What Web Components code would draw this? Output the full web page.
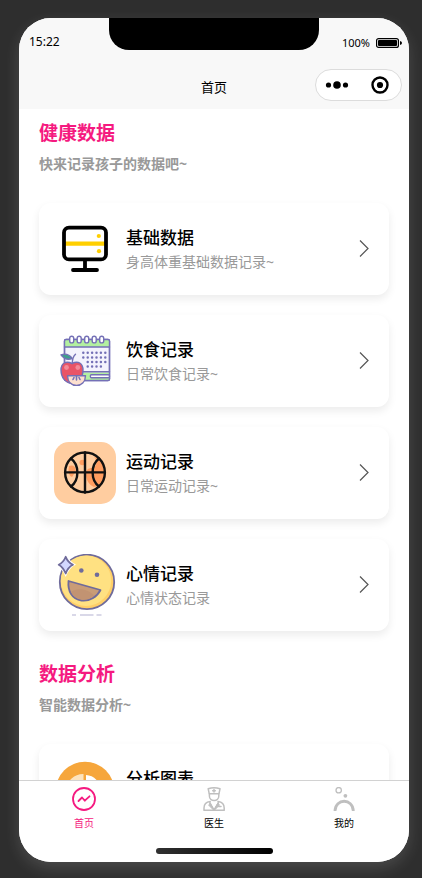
<!DOCTYPE html>
<html lang="zh-CN">
<head>
<meta charset="utf-8">
<meta name="viewport" content="width=device-width, initial-scale=1">
<title>首页</title>
<style>
    html, body{
        height: 100%;
    }
    body{
        --accent: #f51a80;
        --muted: #999;
        margin: 0;
        background: #2e2e2e;
        color: #000;
        font-family: "Noto Sans", "Noto Sans CJK SC", sans-serif;
    }
</style>
</head>
<body>
<phone-frame>
    <status-bar slot="top" time="15:22" battery="100%"></status-bar>
    <nav-bar slot="top">首页</nav-bar>

    <data-section heading="健康数据" note="快来记录孩子的数据吧~">
        <record-card heading="基础数据" note="身高体重基础数据记录~">
            <svg viewBox="0 0 62 62" fill="none" stroke="#000" stroke-width="3.8" stroke-linecap="round" aria-hidden="true">
                <path d="M11 25.7H51" stroke="#ffcf00" stroke-width="4.2"/>
                <rect x="10" y="9.6" width="42" height="31.8" rx="5"/>
                <path d="M31 42V51M19 52H43"/>
                <circle cx="44.8" cy="18" r="2.1" fill="#ffcf00" stroke="none"/>
                <circle cx="45" cy="33.2" r="2.1" fill="#ffcf00" stroke="none"/>
            </svg>
        </record-card>
        <record-card heading="饮食记录" note="日常饮食记录~">
            <svg viewBox="0 0 62 62" fill="none" stroke="#7470b6" stroke-width="1.4" stroke-linecap="round" stroke-linejoin="round" aria-hidden="true">
                <rect x="10.5" y="9.5" width="45" height="41" rx="1.5" fill="#f4f3fd"/>
                <path d="M11 17V11q0-1 1-1H54q1 0 1 1V17ZM11 42.5H55V50H11Z" fill="#b3f0a0" stroke="none"/>
                <path d="M10.5 17H55.5M10.5 41.8H55.5"/>
                <rect x="10.5" y="9.5" width="45" height="41" rx="1.5"/>
                <g fill="#fff">
                    <rect x="15.7" y="6.3" width="4" height="6.6" rx="2"/>
                    <rect x="23.2" y="6.3" width="4" height="6.6" rx="2"/>
                    <rect x="30.7" y="6.3" width="4" height="6.6" rx="2"/>
                    <rect x="38.2" y="6.3" width="4" height="6.6" rx="2"/>
                    <rect x="45.7" y="6.3" width="4" height="6.6" rx="2"/>
                    <rect x="36.4" y="44.8" width="19" height="3" rx="1"/>
                </g>
                <path d="M29.3 22.8H52M29.3 27.4H52M33.7 32H52M33.7 36.6H48" stroke-width="2.5" stroke-dasharray="0 4.4"/>
                <path d="M18 33.5C12 30.5 7 33 7 40C7 47 11 53 18 53.5C25 53 29 47 29 40C29 33 24 30.5 18 33.5Z" fill="#e95467"/>
                <circle cx="12.5" cy="37.5" r="2.4" fill="#f48a98" stroke="none"/>
                <circle cx="23.8" cy="37.5" r="2.4" fill="#f48a98" stroke="none"/>
                <path d="M18.3 33.5C18.3 29 19.2 26.5 21.5 24.3"/>
                <path d="M7 24.8Q14 22.5 18.2 28.5Q11.5 31 7 24.8Z" fill="#3fa08c"/>
                <path d="M13.5 45.8H31.5C31.3 52 27.5 55.4 22.5 55.4S13.7 52 13.5 45.8Z" fill="#fde0cf"/>
                <path d="M20 47.5L19 49.5M22.5 46V50M25 47.5L26 49.5" stroke-width="1.6"/>
            </svg>
        </record-card>
        <record-card heading="运动记录" note="日常运动记录~">
            <svg viewBox="0 0 62 62" fill="none" stroke="#111" stroke-width="2.4" stroke-linecap="round" aria-hidden="true">
                <rect width="62" height="62" rx="15" fill="#ffcda0" stroke="none"/>
                <g fill="#ff9d60" stroke="none">
                    <path d="M40 15C49 17 51.5 25 51.5 31C51 39 46 44 40 45C35 43 32 38 32 32C32 28 34 26 38 26C43 25 44 19 40 15Z"/>
                    <ellipse cx="28.5" cy="20.5" rx="3" ry="2.8"/>
                    <path d="M15 24Q21 22 22 29L18 35Q13 33 15 24Z"/>
                </g>
                <circle cx="31" cy="30.4" r="19.9"/>
                <path d="M31 10.5V50.5M11.5 30.4H50.5M17 16.5C25.5 23 25.5 38 17 44.5M45 16.5C36.5 23 36.5 38 45 44.5"/>
            </svg>
        </record-card>
        <record-card heading="心情记录" note="心情状态记录">
            <svg viewBox="0 0 62 62" stroke="#6f6b9b" stroke-width="1.8" stroke-linejoin="round" aria-hidden="true">
                <circle cx="33" cy="27.9" r="27.2" fill="#ffcf68"/>
                <circle cx="32" cy="26.7" r="25.2" fill="#ffe182" stroke="none"/>
                <path d="M11.7 0Q15 7 22 10.5Q15 14 11.7 23Q8 14 2 10.5Q8 7 11.7 0Z" fill="#fff" stroke="none"/>
                <path d="M11.7 2.8Q14 8.5 19 10.7Q14 13 11.7 19.5Q9 13 4.7 10.7Q9.5 8.5 11.7 2.8Z" fill="#d3d7ff"/>
                <circle cx="27.3" cy="16.5" r="2.3" fill="#6f6b9b" stroke="none"/>
                <circle cx="43" cy="20.7" r="2.3" fill="#6f6b9b" stroke="none"/>
                <path d="M14.5 27L46.5 36C43 43 35.5 47.5 27.5 46.5C18 45 13.5 37 14.5 27Z" fill="#c99c76"/>
                <path d="M17 38C23 33 35 35 40 41.5Q34.5 46.5 27.5 45.7Q20 44.5 17 38Z" fill="#c29372" stroke="none"/>
                <path d="M18 61H22M26 61H39.5M42.5 61H47.5" stroke="#d9d8e8" stroke-width="2"/>
            </svg>
        </record-card>
    </data-section>

    <data-section heading="数据分析" note="智能数据分析~">
        <record-card heading="分析图表" note="数据图表分析~">
            <svg viewBox="0 0 62 62" aria-hidden="true">
                <circle cx="31" cy="32" r="29.3" fill="#f6a63b"/>
                <path d="M29.5 15A17 17 0 1 0 46 34H29.5Z" fill="#fde3bd"/>
                <path d="M32 16A16 16 0 0 1 47 31H32Z" fill="#fff"/>
            </svg>
        </record-card>
    </data-section>

    <tab-bar slot="bottom">
        <tab-item label="首页" active>
            <svg viewBox="0 0 24 24" fill="none" stroke="currentColor" stroke-width="1.8" stroke-linecap="round" stroke-linejoin="round" aria-hidden="true">
                <circle cx="12" cy="12" r="11"/>
                <path d="M6.5 14L10 10.5L12.8 13.7L17.5 9.3"/>
            </svg>
        </tab-item>
        <tab-item label="医生">
            <svg viewBox="0 0 24 24" fill="none" stroke="#bfbfbf" stroke-width="1.5" stroke-linecap="round" stroke-linejoin="round" aria-hidden="true">
                <path d="M6.2 1.8Q12 -.2 18 1.8L17 6.7H7.2ZM12 2.4V5M10.7 3.7H13.3"/>
                <path d="M7.4 6.7V9C7.4 15 16.8 15 16.8 9V6.7"/>
                <path d="M8.2 14.5C4 15 2 17 2 21V23.3H22.2V21C22.2 17 20 15 16 14.5M16.5 19.5H19"/>
                <path d="M7.8 15.5L12 22.5L16.4 15.5" stroke-width="1.2"/>
                <path d="M8 16L6.8 18.3L12 23.5L10 19.5ZM16.2 16L17.4 18.3L12 23.5L14 19.5Z" fill="#bfbfbf" stroke-width="1"/>
            </svg>
        </tab-item>
        <tab-item label="我的">
            <svg viewBox="0 0 24 24" fill="none" stroke="#bfbfbf" aria-hidden="true">
                <circle cx="6.7" cy="3.2" r="2.7" stroke-width="1.3"/>
                <circle cx="13.4" cy="8.8" r="1.9" fill="#bfbfbf" stroke="none"/>
                <path d="M3 24C3.3 11 21 11 21.3 24" stroke-width="2.8"/>
            </svg>
        </tab-item>
    </tab-bar>
</phone-frame>

<script>
'use strict';

class PhoneFrame extends HTMLElement {

    constructor() {
        super();
        let shadowRoot = this.attachShadow({mode: 'open'});
        shadowRoot.innerHTML = `
            <style>
                :host{
                    display: block;
                    box-sizing: border-box;
                    height: 100vh;
                    padding: 18px 13px 16px 19px;
                }
                .phone{
                    display: flex;
                    flex-direction: column;
                    height: 100%;
                    border-radius: 32px;
                    overflow: hidden;
                    background: white;
                    box-shadow: 0 6px 16px rgba(255,255,255,.14);
                }
                .phone__page{
                    flex: 1;
                    min-height: 0;
                    overflow-y: auto;
                    scrollbar-width: none;
                }
            </style>
            <div class="phone">
                <slot name="top"></slot>
                <main class="phone__page"><slot></slot></main>
                <slot name="bottom"></slot>
            </div>
        `;
    }
}

class StatusBar extends HTMLElement {

    constructor() {
        super();
        let shadowRoot = this.attachShadow({mode: 'open'});
        shadowRoot.innerHTML = `
            <style>
                :host{
                    display: grid;
                    grid-template-columns: 1fr 210px 1fr;
                    align-items: center;
                    height: 48px;
                    flex: none;
                    background: #f8f8f8;
                    font-size: 12px;
                    line-height: 16px;
                }
                .time{
                    padding-left: 10px;
                }
                .notch{
                    align-self: start;
                    height: 32px;
                    border-radius: 0 0 20px 20px;
                    background: black;
                }
                .power{
                    display: flex;
                    justify-content: flex-end;
                    align-items: center;
                    gap: 6px;
                    padding: 2px 7px 0 0;
                    font-size: 11px;
                }
            </style>
            <span class="time"></span>
            <span class="notch"></span>
            <span class="power">
                <span class="level"></span>
                <svg width="26" height="10" viewBox="0 0 26 10" aria-hidden="true">
                    <rect x=".6" y=".6" width="21.8" height="8.8" rx="2" fill="none" stroke="#000" stroke-width="1.2"/>
                    <rect x="2" y="2" width="19" height="6" rx="1"/>
                    <path d="M24 3Q26 3.5 26 5T24 7Z"/>
                </svg>
            </span>
        `;
    }

    connectedCallback() {
        this.shadowRoot.querySelector('.time').textContent = this.getAttribute('time');
        this.shadowRoot.querySelector('.level').textContent = this.getAttribute('battery');
    }
}

class NavBar extends HTMLElement {

    constructor() {
        super();
        let shadowRoot = this.attachShadow({mode: 'open'});
        shadowRoot.innerHTML = `
            <style>
                :host{
                    display: grid;
                    grid-template-columns: 1fr auto 1fr;
                    align-items: end;
                    box-sizing: border-box;
                    height: 43px;
                    padding-bottom: 8px;
                    flex: none;
                    background: #f8f8f8;
                }
                h1{
                    grid-column: 2;
                    margin: 0;
                    font-size: 13px;
                    line-height: 28px;
                    font-weight: 400;
                }
                .capsule{
                    justify-self: end;
                    display: flex;
                    box-sizing: border-box;
                    width: 87px;
                    height: 32px;
                    margin-right: 7px;
                    border: 1px solid #dcdcdc;
                    border-radius: 16px;
                    background: white;
                }
                button{
                    flex: 1;
                    display: flex;
                    align-items: center;
                    justify-content: center;
                    padding: 0;
                    border: 0;
                    background: none;
                }
            </style>
            <h1><slot></slot></h1>
            <div class="capsule">
                <button type="button" aria-label="更多">
                    <svg width="24" height="18" viewBox="0 0 24 18">
                        <circle cx="3.5" cy="9" r="2.6"/>
                        <circle cx="12" cy="9" r="3.8"/>
                        <circle cx="20.5" cy="9" r="2.6"/>
                    </svg>
                </button>
                <button type="button" aria-label="关闭">
                    <svg width="18" height="18" viewBox="0 0 18 18">
                        <circle cx="9" cy="9" r="7.5" fill="none" stroke="#000" stroke-width="2.4"/>
                        <circle cx="9" cy="9" r="3.1"/>
                    </svg>
                </button>
            </div>
        `;
    }
}

class DataSection extends HTMLElement {

    constructor() {
        super();
        let shadowRoot = this.attachShadow({mode: 'open'});
        shadowRoot.innerHTML = `
            <style>
                :host{
                    display: block;
                    padding: 11px 20px 19px;
                }
                h2{
                    margin: 0 0 8px;
                    color: var(--accent);
                    font-size: 19px;
                    line-height: 26px;
                    font-weight: 700;
                }
                p{
                    margin: 0 0 29px;
                    color: var(--muted);
                    font-size: 14px;
                    line-height: 20px;
                    font-weight: 700;
                }
                .cards{
                    display: flex;
                    flex-direction: column;
                    gap: 20px;
                }
            </style>
            <h2></h2>
            <p></p>
            <div class="cards"><slot></slot></div>
        `;
    }

    connectedCallback() {
        this.shadowRoot.querySelector('h2').textContent = this.getAttribute('heading');
        this.shadowRoot.querySelector('p').textContent = this.getAttribute('note');
    }
}

class RecordCard extends HTMLElement {

    constructor() {
        super();
        let shadowRoot = this.attachShadow({mode: 'open'});
        shadowRoot.innerHTML = `
            <style>
                :host{
                    display: block;
                }
                a{
                    display: flex;
                    align-items: center;
                    gap: 10px;
                    padding: 15px 20px 15px 15px;
                    border-radius: 12px;
                    background: white;
                    box-shadow: 0 4px 8px rgba(0,0,0,.08);
                    color: inherit;
                    text-decoration: none;
                }
                ::slotted(svg){
                    display: block;
                    flex: none;
                    width: 62px;
                    height: 62px;
                }
                .text{
                    flex: 1;
                }
                h3, p{
                    margin: 0;
                }
                h3{
                    font-size: 17px;
                    line-height: 26px;
                    font-weight: 500;
                }
                p{
                    color: var(--muted);
                    font-size: 14px;
                    line-height: 22px;
                }
            </style>
            <a href="#">
                <slot></slot>
                <div class="text">
                    <h3></h3>
                    <p></p>
                </div>
                <svg width="10" height="18" viewBox="0 0 10 18" fill="none" stroke="#555" stroke-width="1.2" aria-hidden="true">
                    <path d="M1 .5L9 8.500L1 16.500"/>
                </svg>
            </a>
        `;
    }

    connectedCallback() {
        this.shadowRoot.querySelector('h3').textContent = this.getAttribute('heading');
        this.shadowRoot.querySelector('p').textContent = this.getAttribute('note');
    }
}

class TabBar extends HTMLElement {

    constructor() {
        super();
        let shadowRoot = this.attachShadow({mode: 'open'});
        shadowRoot.innerHTML = `
            <style>
                :host{
                    display: flex;
                    flex-direction: column;
                    align-items: center;
                    flex: none;
                    gap: 17px;
                    padding: 6px 0 8px;
                    border-top: 1px solid #d2d2d2;
                    background: white;
                }
                nav{
                    display: flex;
                    align-self: stretch;
                }
                /* home indicator */
                .indicator{
                    width: 30%;
                    height: 6px;
                    border-radius: 3px;
                    background: linear-gradient(90deg, #303030, #000);
                }
            </style>
            <nav><slot></slot></nav>
            <div class="indicator"></div>
        `;
    }
}

class TabItem extends HTMLElement {

    constructor() {
        super();
        let shadowRoot = this.attachShadow({mode: 'open'});
        shadowRoot.innerHTML = `
            <style>
                :host{
                    display: block;
                    flex: 1;
                }
                :host([active]){
                    color: var(--accent);
                }
                a{
                    display: flex;
                    flex-direction: column;
                    align-items: center;
                    gap: 5px;
                    color: inherit;
                    font-size: 10px;
                    line-height: 15px;
                    text-decoration: none;
                }
                ::slotted(svg){
                    display: block;
                    width: 24px;
                    height: 24px;
                }
            </style>
            <a href="#">
                <slot></slot>
                <span></span>
            </a>
        `;
    }

    connectedCallback() {
        this.shadowRoot.querySelector('span').textContent = this.getAttribute('label');
        // mark the current page for screen readers
        if (this.hasAttribute('active')) {
            this.shadowRoot.querySelector('a').setAttribute('aria-current', 'page');
        }
    }
}

customElements.define('phone-frame', PhoneFrame);
customElements.define('status-bar', StatusBar);
customElements.define('nav-bar', NavBar);
customElements.define('data-section', DataSection);
customElements.define('record-card', RecordCard);
customElements.define('tab-bar', TabBar);
customElements.define('tab-item', TabItem);
</script>
</body>
</html>
